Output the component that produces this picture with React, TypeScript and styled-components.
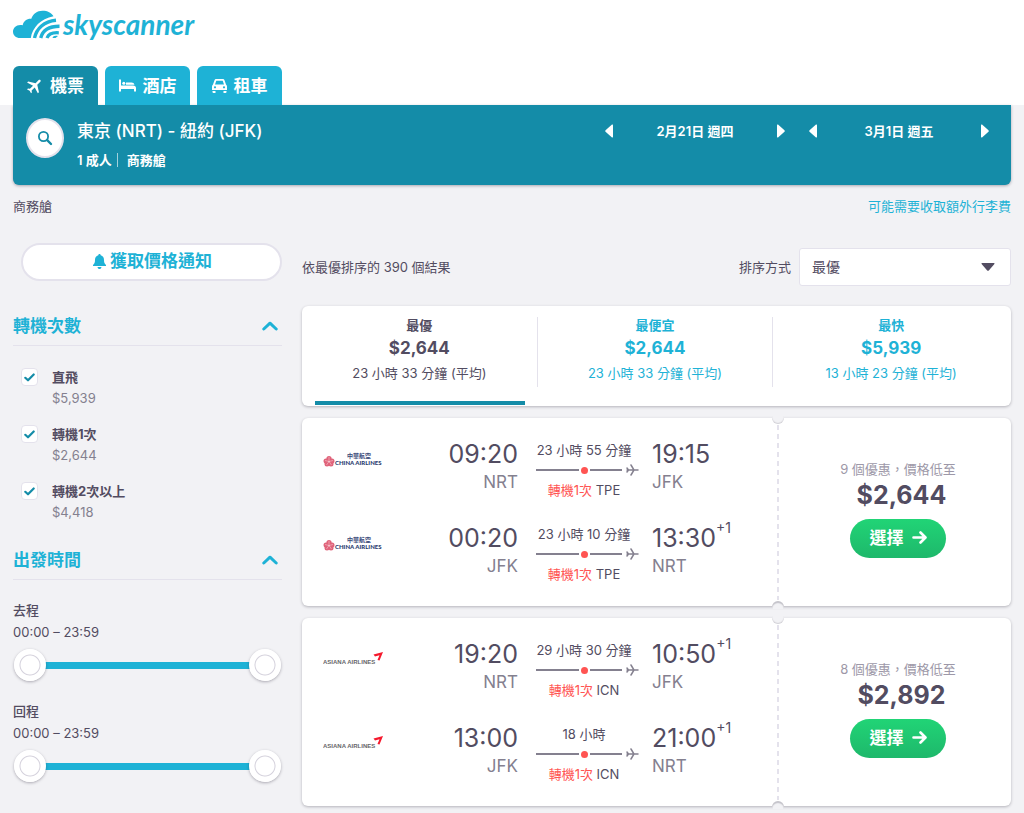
import React, { useId, useState } from 'react';
import styled, { createGlobalStyle, css } from 'styled-components';

const color = {
  sky: '#1eb2d6',
  teal: '#148ca8',
  ink: '#524c61',
  grey: '#84808f',
  soft: '#9d98a8',
  line: '#e4e2ec',
  page: '#f2f2f5',
  red: '#ff5452',
};

const GlobalStyle = createGlobalStyle`
  *, *::before, *::after { box-sizing: border-box; }
  body {
    margin: 0;
    background: ${color.page};
    color: ${color.ink};
    font-family: Inter, "Noto Sans CJK TC", sans-serif;
    font-size: 13px;
    line-height: 20px;
  }
  button, select, input { font: inherit; color: inherit; }
  button { border: 0; padding: 0; background: none; cursor: pointer; }
  a { text-decoration: none; }
  p, h1, h2, ul, dl { margin: 0; padding: 0; }
  svg { display: block; flex: none; }
`;

/* ---------- header ---------- */

const Header = styled.header`
  display: flex;
  flex-direction: column;
  justify-content: space-between;
  height: 105px;
  padding: 6px 13px 0;
  background: #fff;
`;

const Brand = styled.a`
  display: flex;
  align-items: center;
  gap: 3px;
  height: 36px;
  color: ${color.sky};
`;

const BrandName = styled.span`
  font: italic 700 28px/36px Lato, sans-serif;
`;

const Tabs = styled.nav`
  display: flex;
  gap: 7px;
`;

const Tab = styled.a<{ $active?: boolean }>`
  display: flex;
  align-items: center;
  justify-content: center;
  gap: 7px;
  width: 85px;
  height: 39px;
  border-radius: 6px 6px 0 0;
  background: ${(p) => (p.$active ? color.teal : color.sky)};
  color: #fff;
  font-size: 17px;
  font-weight: 700;
  line-height: 24px;
`;

const SearchPanel = styled.section`
  display: flex;
  justify-content: space-between;
  height: 80px;
  margin: 0 13px;
  padding: 13px 22px 0 13px;
  border-radius: 0 0 6px 6px;
  background: ${color.teal};
  box-shadow: 0 1px 3px rgba(37, 32, 51, 0.35);
  color: #fff;
`;

const SearchSummary = styled.div`
  display: flex;
  gap: 13px;
`;

const SearchButton = styled.button`
  display: grid;
  place-items: center;
  width: 38px;
  height: 40px;
  border: 2px solid ${color.line};
  border-radius: 50%;
  background: #fff;
  color: ${color.teal};
`;

const Route = styled.h1`
  font-size: 17px;
  font-weight: 500;
  line-height: 26px;
`;

const Party = styled.p`
  display: flex;
  align-items: center;
  margin-top: 6px;
  font-weight: 600;
  span + span {
    margin-left: 5px;
    padding-left: 9px;
    border-left: 1px solid rgba(255, 255, 255, 0.6);
    line-height: 14px;
  }
`;

const Dates = styled.div`
  display: flex;
  gap: 24px;
`;

const DatePicker = styled.div`
  display: flex;
  align-items: center;
  justify-content: space-between;
  width: 180px;
  height: 26px;
  font-weight: 600;
`;

/* ---------- page body ---------- */

const Notices = styled.div`
  display: flex;
  justify-content: space-between;
  padding: 11px 13px 0;
`;

const TextLink = styled.a`
  color: ${color.sky};
`;

const Columns = styled.div`
  display: grid;
  grid-template-columns: 269px minmax(0, 1fr);
  gap: 20px;
  padding: 27px 13px 7px;
`;

const Sidebar = styled.aside``;

const AlertButton = styled.button`
  display: flex;
  align-items: center;
  justify-content: center;
  gap: 4px;
  width: 261px;
  height: 38px;
  margin-left: 8px;
  padding: 0 0 2px 2px;
  border: 2px solid ${color.line};
  border-radius: 19px;
  background: #fff;
  color: ${color.sky};
  font-size: 17px;
  font-weight: 700;
  line-height: 24px;
`;

const FilterHeading = styled.h2`
  border-bottom: 1px solid ${color.line};
  button {
    display: flex;
    align-items: center;
    justify-content: space-between;
    width: 100%;
    height: 39px;
    padding-right: 4px;
    color: ${color.sky};
    font-size: 17px;
    font-weight: 700;
    line-height: 24px;
  }
`;

const StopsFilter = styled.section`
  padding-top: 25px;
`;

const StopsList = styled.ul`
  display: flex;
  flex-direction: column;
  gap: 15px;
  padding: 21px 0 0 8px;
  list-style: none;
`;

const StopRow = styled.li`
  display: flex;
  gap: 14px;
`;

const CheckWrap = styled.span`
  display: grid;
  place-items: center;
  width: 17px;
  height: 20px;
  > * { grid-area: 1 / 1; }
  svg { pointer-events: none; visibility: hidden; }
  input:checked + svg { visibility: visible; }
`;

const CheckInput = styled.input`
  appearance: none;
  width: 17px;
  height: 18px;
  margin: 0;
  border: 1px solid ${color.line};
  border-radius: 4px;
  background: #fff;
`;

const StopLabel = styled.label`
  display: block;
  font-weight: 700;
  line-height: 21px;
`;

const StopPrice = styled.p`
  color: ${color.grey};
  line-height: 21px;
`;

const TimeFilter = styled.section`
  padding-top: 17px;
`;

const TimeBlock = styled.div`
  padding-top: 19px;
`;

const TimeName = styled.p`
  font-weight: 500;
  line-height: 22px;
`;

const TimeRange = styled.p`
  line-height: 22px;
`;

const thumb = css`
  appearance: none;
  width: 32px;
  height: 32px;
  border: 5px solid #fff;
  border-radius: 50%;
  background: radial-gradient(circle, #fff 9px, #d3d0db 10px, #fff 11px);
  box-shadow: 0 1px 3px rgba(37, 32, 51, 0.35);
  pointer-events: auto;
`;

const SliderWrap = styled.div`
  display: grid;
  align-items: center;
  height: 32px;
  margin: 6px 1px 0;
  &::before, > * { grid-area: 1 / 1; }
  &::before {
    content: '';
    height: 7px;
    margin: 0 16px;
    background: ${color.sky};
  }
`;

const RangeInput = styled.input`
  appearance: none;
  width: 100%;
  height: 32px;
  margin: 0;
  background: transparent;
  pointer-events: none;
  &::-webkit-slider-thumb { ${thumb} }
  &::-moz-range-thumb { ${thumb} }
`;

/* ---------- results ---------- */

const Results = styled.main`
  display: flex;
  flex-direction: column;
  gap: 12px;
`;

const Toolbar = styled.div`
  display: flex;
  align-items: center;
  justify-content: space-between;
  height: 38px;
  margin: 5px 0 8px;
`;

const SortField = styled.div`
  display: flex;
  align-items: center;
  gap: 8px;
`;

const SelectWrap = styled.div`
  display: grid;
  align-items: center;
  width: 212px;
  > * { grid-area: 1 / 1; }
  svg { justify-self: end; margin-right: 16px; pointer-events: none; }
`;

const Select = styled.select`
  appearance: none;
  width: 100%;
  height: 38px;
  padding: 0 12px;
  border: 1px solid ${color.line};
  border-radius: 3px;
  background: #fff;
  font-size: 14px;
`;

const cardShell = css`
  border-radius: 6px;
  background: #fff;
  box-shadow: 0 1px 3px rgba(37, 32, 51, 0.3);
`;

const SortCard = styled.div`
  ${cardShell}
  display: grid;
  grid-template-columns: repeat(3, 1fr);
  height: 100px;
  padding-right: 2px;
`;

const SortOption = styled.button<{ $active?: boolean }>`
  display: grid;
  grid-template-rows: 81px 1fr;
  color: ${(p) => (p.$active ? color.ink : color.sky)};
  &::after {
    content: '';
    align-self: end;
    height: 4px;
    margin: 0 13px 1px;
    background: ${(p) => (p.$active ? color.teal : 'transparent')};
  }
`;

const SortBody = styled.span`
  display: flex;
  flex-direction: column;
  align-self: end;
  align-items: center;
  height: 70px;
  ${SortOption}:not(:last-child) & { border-right: 1px solid ${color.line}; }
`;

const SortName = styled.span`
  margin-top: -3px;
  font-weight: 600;
  line-height: 22px;
`;

const SortPrice = styled.strong`
  font-size: 17px;
  line-height: 24px;
`;

const SortTime = styled.span`
  line-height: 26px;
`;

const Ticket = styled.article`
  ${cardShell}
  display: grid;
  grid-template-columns: minmax(0, 1fr) 233px;
  height: 188px;
`;

const Legs = styled.div`
  display: flex;
  flex-direction: column;
  padding: 21px 0 0 21px;
`;

const Leg = styled.div`
  display: grid;
  grid-template-columns: 60px 135px 134px 1fr;
  height: 84px;
`;

const Carrier = styled.div`
  padding-top: 13px;
`;

const Stop = styled.div<{ $end?: boolean }>`
  display: flex;
  flex-direction: column;
  align-items: ${(p) => (p.$end ? 'flex-end' : 'flex-start')};
`;

const Clock = styled.div`
  display: flex;
  font-size: 25px;
  line-height: 30px;
  sup {
    font-size: 14px;
    line-height: 10px;
  }
`;

const Airport = styled.div`
  color: ${color.grey};
  font-size: 17px;
  line-height: 26px;
`;

const Journey = styled.div`
  display: flex;
  flex-direction: column;
  padding-left: 18px;
  line-height: 22px;
`;

const JourneyText = styled.div`
  width: 96px;
  text-align: center;
  white-space: nowrap;
  em { color: ${color.red}; font-style: normal; }
`;

const JourneyLine = styled.div`
  display: flex;
  align-items: center;
  height: 18px;
  gap: 2px;
  svg { margin-left: 2px; }
`;

const Segment = styled.span<{ $width: number }>`
  flex: none;
  width: ${(p) => p.$width}px;
  height: 2px;
  background: ${color.grey};
`;

const StopDot = styled.span`
  flex: none;
  width: 7px;
  height: 7px;
  border-radius: 50%;
  background: ${color.red};
`;

const Offer = styled.div`
  position: relative;
  display: flex;
  flex-direction: column;
  align-items: center;
  padding-top: 40px;
  padding-left: 7px;
`;

const Perforation = styled.span`
  position: absolute;
  top: 7px;
  bottom: 7px;
  left: -1px;
  width: 2px;
  background: repeating-linear-gradient(${color.line} 0 5px, transparent 5px 9px);
`;

const Notch = styled.span<{ $bottom?: boolean }>`
  position: absolute;
  left: -6px;
  width: 12px;
  height: 8px;
  background: ${color.page};
  ${(p) =>
    p.$bottom
      ? css`
          bottom: -2px;
          border-radius: 6px 6px 0 0;
          box-shadow: inset 0 2px 1px rgba(37, 32, 51, 0.22);
        `
      : css`
          top: -2px;
          border-radius: 0 0 6px 6px;
          box-shadow: inset 0 -1px 1px rgba(37, 32, 51, 0.16);
        `}
`;

const OfferCount = styled.p`
  color: ${color.soft};
  line-height: 22px;
`;

const OfferPrice = styled.strong`
  margin-left: 7px;
  font-size: 25px;
  line-height: 30px;
`;

const SelectButton = styled.button`
  display: flex;
  align-items: center;
  justify-content: center;
  gap: 8px;
  width: 96px;
  height: 39px;
  margin-top: 9px;
  padding-bottom: 2px;
  border-radius: 20px;
  background: linear-gradient(#21d476, #1eb86b);
  color: #fff;
  font-size: 17px;
  font-weight: 700;
`;

/* ---------- drawings ---------- */

const CloudLogo = () => (
  <svg width="47" height="29" viewBox="0 0 47 29" fill="none" stroke="currentColor" aria-hidden="true">
    <path
      d="M7 28 H17.800 C19.500 17.500 27.500 8.800 40.500 6.300 C38.500 2.800 34.500 .8 29.500 .8 C24 .8 20 4 18.300 8.800 C14 8.500 10.500 11 9.700 15.200 C4 13.800 0 17.500 0 21.500 C0 25.500 3 28 7 28 Z"
      fill="currentColor"
      stroke="none"
    />
    <path d="M21.500 28 C23.500 18.500 31 11.200 43 10.200" strokeWidth="3.400" />
    <path d="M27.700 28 C29.500 21 35.500 16.300 46.500 16.300" strokeWidth="3.400" />
    <path d="M34 28 C35.500 24 39 22.300 45.800 22.800" strokeWidth="3.200" />
    <path d="M39.500 28 C40 26 41.800 25.300 45 26 L42.500 28 Z" fill="currentColor" stroke="none" />
  </svg>
);

const planePath =
  'M21 16v-2l-8-5V3.500c0-.83-.67-1.500-1.500-1.500S10 2.670 10 3.500V9l-8 5v2l8-2.500V19l-2 1.500V22l3.500-1 3.500 1v-1.500L13 19v-5.500l8 2.500z';

const Plane = ({ size, turn }: { size: number; turn: number }) => (
  <svg width={size} height={size} viewBox="2 2 20 20" fill="currentColor" aria-hidden="true">
    <path d={planePath} transform={`rotate(${turn} 12 12)`} />
  </svg>
);

const SmallPlane = () => (
  <svg width="13" height="12" viewBox="0 0 13 12" fill="none" stroke={color.grey} strokeWidth="1.500" strokeLinecap="round" aria-hidden="true">
    <path d="M1 6 H12 M5 1 L8 6 L5 11 M1 4 L2.500 6 L1 8" />
  </svg>
);

const Bed = () => (
  <svg width="17" height="13" viewBox="0 0 17 13" fill="currentColor" aria-hidden="true">
    <path d="M0 0.500 H2 V6.500 H14 Q17 6.500 17 9 V12.500 H15 V10 H2 V12.500 H0 Z" />
    <circle cx="4.800" cy="4.200" r="1.500" />
    <path d="M7 3.500 H12.500 Q15 3.500 15.500 5.700 H7 Z" />
  </svg>
);

const Car = () => (
  <svg width="15" height="14" viewBox="0 0 15 14" fill="currentColor" aria-hidden="true">
    <path
      fillRule="evenodd"
      d="M4 0 H11 Q12 0 12.400 1 L14 5.500 Q15 6.300 15 7.500 V11 H0 V7.500 Q0 6.300 1 5.500 L2.600 1 Q3 0 4 0 Z M4.300 1.800 L3 5.500 H12 L10.700 1.800 Z M3 7.200 A1.100 1.100 0 1 0 3 9.400 A1.100 1.100 0 1 0 3 7.200 Z M12 7.200 A1.100 1.100 0 1 0 12 9.400 A1.100 1.100 0 1 0 12 7.200 Z"
    />
    <path d="M0.500 12 H3.500 V14 H1.500 Q0.500 14 0.500 13 Z M11.500 12 H14.500 V13 Q14.500 14 13.500 14 H11.500 Z" />
  </svg>
);

const Magnifier = () => (
  <svg width="16" height="16" viewBox="0 0 16 16" fill="none" stroke="currentColor" strokeLinecap="round" aria-hidden="true">
    <circle cx="6.500" cy="6.500" r="4.600" strokeWidth="1.800" />
    <path d="M10.200 10.200 L14 14" strokeWidth="2.400" />
  </svg>
);

const Bell = () => (
  <svg width="13" height="15" viewBox="0 0 13 15" fill="currentColor" aria-hidden="true">
    <path d="M6.500 0 C7.200 0 7.600 .5 7.700 1.200 C10 1.800 11 3.600 11 6 C11 8.500 11.600 9.700 13 11 V12 H0 V11 C1.400 9.700 2 8.500 2 6 C2 3.600 3 1.800 5.300 1.200 C5.400 .5 5.800 0 6.500 0 Z M4.500 13 H8.500 C8.200 14.400 7.500 15 6.500 15 S4.800 14.400 4.500 13 Z" />
  </svg>
);

const Chevron = () => (
  <svg width="16" height="10" viewBox="0 0 16 10" fill="none" stroke="currentColor" strokeWidth="3" strokeLinecap="round" strokeLinejoin="round" aria-hidden="true">
    <path d="M1.800 8 L8 2.200 L14.200 8" />
  </svg>
);

const Tick = () => (
  <svg width="11" height="9" viewBox="0 0 11 9" fill="none" stroke={color.teal} strokeWidth="2.200" strokeLinecap="round" strokeLinejoin="round" aria-hidden="true">
    <path d="M1.300 4.800 L4 7.300 L9.700 1.500" />
  </svg>
);

const Arrow = () => (
  <svg width="15" height="13" viewBox="0 0 15 13" fill="none" stroke="currentColor" strokeWidth="2.600" strokeLinecap="round" strokeLinejoin="round" aria-hidden="true">
    <path d="M1.500 6.500 H13 M8.500 1.500 L13.500 6.500 L8.500 11.500" />
  </svg>
);

const Triangle = ({ back }: { back?: boolean }) => (
  <svg width="8" height="14" viewBox="0 0 8 14" fill="currentColor" aria-hidden="true">
    <path d={back ? 'M8 1.200 Q8 0 7 .6 L.5 6.200 Q0 7 .5 7.800 L7 13.400 Q8 14 8 12.800 Z' : 'M0 1.200 Q0 0 1 .6 L7.500 6.200 Q8 7 7.500 7.800 L1 13.400 Q0 14 0 12.800 Z'} />
  </svg>
);

const Caret = () => (
  <svg width="14" height="8" viewBox="0 0 14 8" fill={color.ink} aria-hidden="true">
    <path d="M1.200 0 H12.800 Q14 0 13.400 1 L7.800 7.400 Q7 8 6.200 7.400 L.6 1 Q0 0 1.200 0 Z" />
  </svg>
);

const ChinaAirlinesLogo = () => (
  <svg width="62" height="16" viewBox="0 0 62 16" role="img" aria-label="China Airlines">
    <g fill="#e0637a">
      <circle cx="6" cy="6.500" r="2.600" />
      <circle cx="3" cy="9" r="2.500" />
      <circle cx="9" cy="9" r="2.500" />
      <circle cx="4" cy="12" r="2.500" />
      <circle cx="8" cy="12" r="2.500" />
    </g>
    <path d="M6 9.500 V5 M6 9.500 L2 8.500 M6 9.500 L10 8.500 M6 9.500 L3.500 13 M6 9.500 L8.500 13" stroke="#f6c6cf" strokeWidth="0.600" />
    <text x="24" y="6" fontFamily="'Noto Sans CJK TC', sans-serif" fontWeight="700" fontSize="6" fill="#3a4a7a">中華航空</text>
    <text x="12" y="13" fontFamily="Lato, sans-serif" fontWeight="900" fontSize="6" fill="#2b3c70">CHINA AIRLINES</text>
  </svg>
);

const AsianaLogo = () => (
  <svg width="62" height="16" viewBox="0 0 62 16" role="img" aria-label="Asiana Airlines">
    <text x="0" y="12" fontFamily="'Liberation Sans', sans-serif" fontWeight="700" fontSize="6" fill="#66666a">ASIANA AIRLINES</text>
    <path d="M50.500 2.500 L60 0 L56.500 8.500 L54.500 8 L56.500 3.200 L52 4.500 Z" fill="#f5192d" />
  </svg>
);

/* ---------- data ---------- */

type LegData = { depart: string; from: string; length: string; via: string; arrive: string; to: string; nextDay?: boolean };
type TicketData = { airline: 'china' | 'asiana'; offers: number; price: string; legs: LegData[] };

const tickets: TicketData[] = [
  {
    airline: 'china',
    offers: 9,
    price: '$2,644',
    legs: [
      { depart: '09:20', from: 'NRT', length: '23 小時 55 分鐘', via: 'TPE', arrive: '19:15', to: 'JFK' },
      { depart: '00:20', from: 'JFK', length: '23 小時 10 分鐘', via: 'TPE', arrive: '13:30', to: 'NRT', nextDay: true },
    ],
  },
  {
    airline: 'asiana',
    offers: 8,
    price: '$2,892',
    legs: [
      { depart: '19:20', from: 'NRT', length: '29 小時 30 分鐘', via: 'ICN', arrive: '10:50', to: 'JFK', nextDay: true },
      { depart: '13:00', from: 'JFK', length: '18 小時', via: 'ICN', arrive: '21:00', to: 'NRT', nextDay: true },
    ],
  },
];

const sorts = [
  { name: '最優', price: '$2,644', time: '23 小時 33 分鐘 (平均)' },
  { name: '最便宜', price: '$2,644', time: '23 小時 33 分鐘 (平均)' },
  { name: '最快', price: '$5,939', time: '13 小時 23 分鐘 (平均)' },
];

const stops = [
  { name: '直飛', price: '$5,939' },
  { name: '轉機1次', price: '$2,644' },
  { name: '轉機2次以上', price: '$4,418' },
];

/* ---------- components ---------- */

const DateControl = ({ label }: { label: string }) => (
  <DatePicker>
    <button type="button" aria-label="前一天"><Triangle back /></button>
    <span>{label}</span>
    <button type="button" aria-label="後一天"><Triangle /></button>
  </DatePicker>
);

const StopOption = ({ name, price }: { name: string; price: string }) => {
  const id = useId();
  return (
    <StopRow>
      <CheckWrap>
        <CheckInput type="checkbox" id={id} defaultChecked />
        <Tick />
      </CheckWrap>
      <div>
        <StopLabel htmlFor={id}>{name}</StopLabel>
        <StopPrice>{price}</StopPrice>
      </div>
    </StopRow>
  );
};

const clock = (m: number) => `${String(Math.floor(m / 60)).padStart(2, '0')}:${String(m % 60).padStart(2, '0')}`;

const TimeSlider = ({ name }: { name: string }) => {
  const [low, setLow] = useState(0);
  const [high, setHigh] = useState(1439);
  return (
    <TimeBlock>
      <TimeName>{name}</TimeName>
      <TimeRange>{clock(low)} – {clock(high)}</TimeRange>
      <SliderWrap>
        <RangeInput type="range" min={0} max={1439} value={low} aria-label={`${name}最早`} onChange={(e) => setLow(Math.min(+e.target.value, high))} />
        <RangeInput type="range" min={0} max={1439} value={high} aria-label={`${name}最晚`} onChange={(e) => setHigh(Math.max(+e.target.value, low))} />
      </SliderWrap>
    </TimeBlock>
  );
};

const FlightLeg = ({ leg, airline }: { leg: LegData; airline: TicketData['airline'] }) => (
  <Leg>
    <Carrier>{airline === 'china' ? <ChinaAirlinesLogo /> : <AsianaLogo />}</Carrier>
    <Stop $end>
      <Clock>{leg.depart}</Clock>
      <Airport>{leg.from}</Airport>
    </Stop>
    <Journey>
      <JourneyText>{leg.length}</JourneyText>
      <JourneyLine>
        <Segment $width={43} />
        <StopDot />
        <Segment $width={32} />
        <SmallPlane />
      </JourneyLine>
      <JourneyText><em>轉機1次</em> {leg.via}</JourneyText>
    </Journey>
    <Stop>
      <Clock>{leg.arrive}{leg.nextDay && <sup>+1</sup>}</Clock>
      <Airport>{leg.to}</Airport>
    </Stop>
  </Leg>
);

const FlightTicket = ({ data }: { data: TicketData }) => (
  <Ticket>
    <Legs>
      {data.legs.map((leg) => (
        <FlightLeg key={leg.depart} leg={leg} airline={data.airline} />
      ))}
    </Legs>
    <Offer>
      <Perforation />
      <Notch />
      <Notch $bottom />
      <OfferCount>{data.offers} 個優惠，價格低至</OfferCount>
      <OfferPrice>{data.price}</OfferPrice>
      <SelectButton type="button">選擇 <Arrow /></SelectButton>
    </Offer>
  </Ticket>
);

export default function App() {
  const [active, setActive] = useState(0);
  return (
    <>
      <GlobalStyle />
      <Header>
        <Brand href="#home">
          <CloudLogo />
          <BrandName>skyscanner</BrandName>
        </Brand>
        <Tabs>
          <Tab href="#flights" $active><Plane size={16} turn={45} />機票</Tab>
          <Tab href="#hotels"><Bed />酒店</Tab>
          <Tab href="#cars"><Car />租車</Tab>
        </Tabs>
      </Header>
      <SearchPanel>
        <SearchSummary>
          <SearchButton type="button" aria-label="搜尋"><Magnifier /></SearchButton>
          <div>
            <Route>東京 (NRT) - 紐約 (JFK)</Route>
            <Party><span>1 成人</span><span>商務艙</span></Party>
          </div>
        </SearchSummary>
        <Dates>
          <DateControl label="2月21日 週四" />
          <DateControl label="3月1日 週五" />
        </Dates>
      </SearchPanel>
      <Notices>
        <span>商務艙</span>
        <TextLink href="#baggage">可能需要收取額外行李費</TextLink>
      </Notices>
      <Columns>
        <Sidebar>
          <AlertButton type="button"><Bell />獲取價格通知</AlertButton>
          <StopsFilter>
            <FilterHeading><button type="button">轉機次數<Chevron /></button></FilterHeading>
            <StopsList>
              {stops.map((s) => <StopOption key={s.name} {...s} />)}
            </StopsList>
          </StopsFilter>
          <TimeFilter>
            <FilterHeading><button type="button">出發時間<Chevron /></button></FilterHeading>
            <TimeSlider name="去程" />
            <TimeSlider name="回程" />
          </TimeFilter>
        </Sidebar>
        <Results>
          <Toolbar>
            <span>依最優排序的 390 個結果</span>
            <SortField>
              <label htmlFor="sort">排序方式</label>
              <SelectWrap>
                <Select id="sort" value={active} onChange={(e) => setActive(+e.target.value)}>
                  {sorts.map((s, i) => <option key={s.name} value={i}>{s.name}</option>)}
                </Select>
                <Caret />
              </SelectWrap>
            </SortField>
          </Toolbar>
          <SortCard>
            {sorts.map((s, i) => (
              <SortOption key={s.name} type="button" $active={i === active} onClick={() => setActive(i)}>
                <SortBody>
                  <SortName>{s.name}</SortName>
                  <SortPrice>{s.price}</SortPrice>
                  <SortTime>{s.time}</SortTime>
                </SortBody>
              </SortOption>
            ))}
          </SortCard>
          {tickets.map((t) => <FlightTicket key={t.airline} data={t} />)}
        </Results>
      </Columns>
    </>
  );
}
